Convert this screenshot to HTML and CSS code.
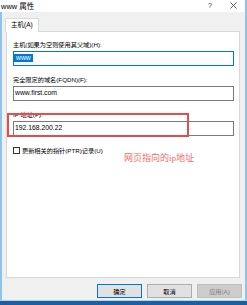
FILE: index.html
```html
<!DOCTYPE html>
<html lang="zh-CN">
<head>
  <meta charset="UTF-8" />
  <title>www 属性</title>
  <link rel="stylesheet" href="styles.css">
</head>
<body>
  <div class="window">
    <div class="titlebar">
      <span class="title">www 属性</span>
      <span class="help">?</span>
      <span class="close">
        <svg width="7" height="7" viewBox="0 0 7 7"><path d="M0.5 0.5L6.5 6.5M6.5 0.5L0.5 6.5" stroke="#333" stroke-width="0.8" fill="none"/></svg>
      </span>
    </div>

    <div class="content">
      <div class="tabs">
        <div class="tab">主机(A)</div>
      </div>

      <div class="panel">
        <div class="label">主机(如果为空则使用其父域)(H):</div>
        <div class="field focused"><span class="selected">www</span></div>

        <div class="label">完全限定的域名(FQDN)(F):</div>
        <div class="field">www.first.com</div>

        <div class="label">IP 地址(P):</div>
        <div class="field">192.168.200.22</div>

        <div class="check-row">
          <span class="checkbox"></span>
          <span>更新相关的指针(PTR)记录(U)</span>
        </div>

        <!-- annotation drawn over the dialog -->
        <div class="mark"></div>
        <div class="note">网页指向的ip地址</div>
      </div>

      <div class="buttons">
        <button class="btn default">确定</button>
        <button class="btn">取消</button>
        <button class="btn disabled">应用(A)</button>
      </div>
    </div>
  </div>
  <div class="taskbar"></div>
</body>
</html>
```

FILE: styles.css
```css
body {
  margin: 0;
  width: 247px;
  height: 305px;
  overflow: hidden;
  background-color: #8fc3ec;
  font-family: "Liberation Sans", "Noto Sans CJK SC", sans-serif;
  color: #000;
}

.window {
  width: 245px;
}

.titlebar {
  height: 12px;
  background-color: #fff;
  display: flex;
  align-items: center;
  padding-left: 1px;
  padding-right: 2px;
  font-size: 7.5px;
}

.title {
  flex: 1;
  margin-top: -2px;
}

.help {
  width: 26px;
  text-align: center;
  color: #333;
  font-size: 7px;
  margin-top: -2px;
}

.close {
  width: 20px;
  display: flex;
  justify-content: center;
  margin-top: -2px;
}

.content {
  margin-left: 2px;
  height: 288px;
  box-sizing: border-box;
  background-color: #f0f0f0;
  padding: 6px 3px 0 4px;
}

.tabs {
  display: flex;
}

.tab {
  position: relative;
  z-index: 1;
  margin-left: -1px;
  margin-bottom: -1px;
  height: 13px;
  padding: 0 5px;
  background-color: #fff;
  border: 1px solid #d9d9d9;
  border-bottom: none;
  font-size: 6.5px;
  line-height: 12px;
}

.panel {
  position: relative;
  width: 234px;
  height: 247px;
  box-sizing: border-box;
  background-color: #fff;
  border: 1px solid #d9d9d9;
  padding: 8px 5px 0 6px;
}

.label {
  font-size: 6.2px;
  line-height: 9px;
  height: 9px;
  margin-bottom: 2px;
  white-space: nowrap;
}

.field {
  height: 15px;
  box-sizing: border-box;
  border: 1px solid #7a7a7a;
  padding: 1px 1px 0;
  font-size: 6.8px;
  line-height: 9px;
  margin-bottom: 9px;
}

.field.focused {
  border-color: #0078d7;
  padding-left: 0;
}

.selected {
  display: inline-block;
  background-color: #0078d7;
  color: #fff;
  padding: 0 2px;
  line-height: 8px;
}

.check-row {
  display: flex;
  align-items: center;
  gap: 2px;
  margin-top: 10px;
  height: 9px;
  font-size: 6.2px;
  white-space: nowrap;
}

.checkbox {
  width: 7px;
  height: 7px;
  box-sizing: border-box;
  border: 1px solid #333;
  background-color: #fff;
}

.mark {
  position: absolute;
  left: 0;
  top: 81px;
  width: 182px;
  height: 24px;
  box-sizing: border-box;
  border: 2px solid #eb4a4c;
}

.note {
  position: absolute;
  left: 117px;
  top: 120px;
  font-family: "Liberation Serif", "Noto Sans CJK SC", serif;
  font-size: 9px;
  line-height: 12px;
  color: #f26a6a;
  white-space: nowrap;
}

.buttons {
  display: flex;
  justify-content: flex-end;
  gap: 5px;
  margin-top: 6px;
}

.btn {
  width: 45px;
  height: 14px;
  padding: 0;
  box-sizing: border-box;
  border: 1px solid #adadad;
  background-color: #e1e1e1;
  font-family: "Liberation Sans", "Noto Sans CJK SC", sans-serif;
  font-size: 6.2px;
  color: #000;
}

.btn.default {
  border-color: #0078d7;
}

.btn.disabled {
  background-color: #cccccc;
  border-color: #bfbfbf;
  color: #838383;
}

.taskbar {
  height: 5px;
  box-sizing: border-box;
  border-top: 1px solid #a9d3f2;
  background-color: #1e5d9e;
}
```
